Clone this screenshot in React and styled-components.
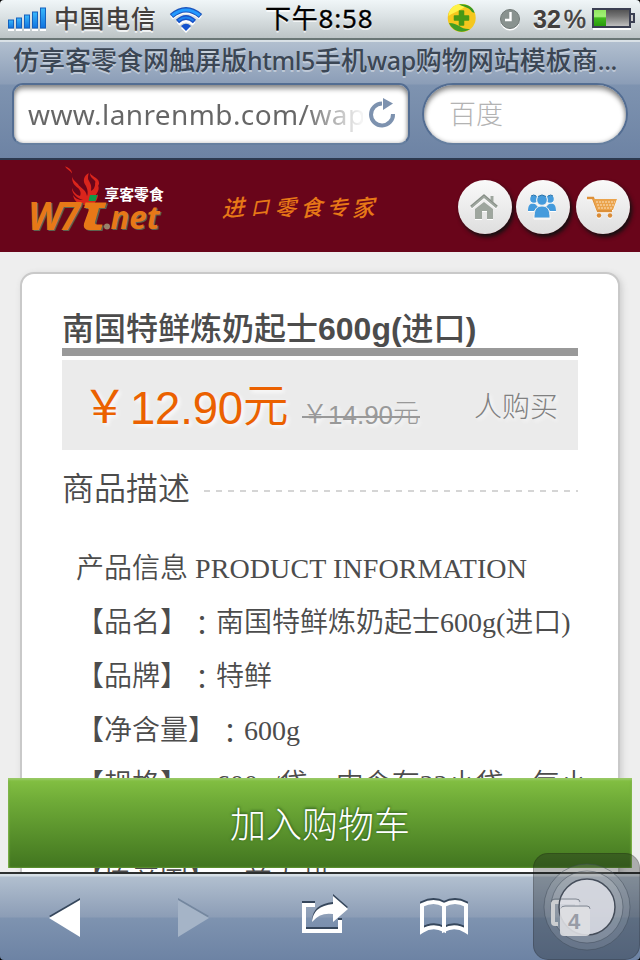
import React from 'react';
import styled, { createGlobalStyle } from 'styled-components';

const cjk = '"Noto Sans CJK SC", sans-serif';

const GlobalStyle = createGlobalStyle`
  * { box-sizing: border-box; }
  body { margin: 0; background: #000; }
`;

const Phone = styled.div`
  width: 640px;
  height: 960px;
  display: flex;
  flex-direction: column;
  position: relative;
  overflow: hidden;
  border-radius: 4px;
  font-family: "Liberation Sans", ${cjk};
  white-space: nowrap;
  text-spacing-trim: space-all;
`;

/* ---------- status bar ---------- */

const StatusBar = styled.div`
  flex: none;
  height: 40px;
  display: flex;
  align-items: center;
  padding: 0 0 2px 8px;
  background: linear-gradient(#f0f6f8 0, #dce3e5 16px, #bdc4c6 38px);
  border-bottom: 2px solid #6b7776;
  text-shadow: 0 2px 0 rgba(255, 255, 255, 0.75);
  & > * { flex: none; }
`;

const Carrier = styled.span`
  width: 122px;
  padding-left: 7px;
  font: 500 25px/38px ${cjk};
  letter-spacing: 0.6px;
  margin-top: -2px;
  color: #43403e;
`;

const WifiSlot = styled.span`
  display: flex;
  margin-top: 2px;
`;

const Clock = styled.span`
  width: 182px;
  margin-left: 62px;
  font: 400 26px/38px "Noto Sans", ${cjk};
  letter-spacing: 0.8px;
  -webkit-text-stroke: 0.3px #000;
  color: #000;
`;

const AlarmSlot = styled.span`
  display: flex;
  margin: 2px 0 0 22px;
`;

const Percent = styled.span`
  display: flex;
  gap: 3px;
  width: 59px;
  margin: 2px 0 0 12px;
  font: bold 25px/38px "Liberation Sans", sans-serif;
  color: #43403e;
`;

const PercentSign = styled.span`
  font-weight: 400;
  -webkit-text-stroke: 0.5px #43403e;
`;

/* ---------- browser chrome ---------- */

const BrowserBar = styled.div`
  flex: none;
  height: 120px;
  border-top: 2px solid #d9e1e6;
  border-bottom: 2px solid #2c394f;
  background: linear-gradient(#b1bfcf 0, #8b9db7 42px, #7e93b0 43px, #6d83a4 100%);
`;

const PageTitle = styled.div`
  height: 41px;
  padding-left: 13px;
  font: 500 26px/34px ${cjk};
  color: #3b4654;
  text-shadow: 0 2px 0 rgba(255, 255, 255, 0.4);
`;

const TitleLatin = styled.span`
  font: 500 25px/30px "Noto Sans", sans-serif;
  letter-spacing: -0.4px;
`;

const Fields = styled.div`
  display: flex;
  gap: 12px;
  padding: 0 12px;
`;

const Field = styled.div`
  height: 62px;
  display: flex;
  align-items: center;
  border: 2px solid #536d92;
  border-bottom-color: #667f9f;
  background: #fff;
  box-shadow: inset 0 4px 5px rgba(0, 0, 0, 0.4), inset 0 0 4px rgba(0, 0, 0, 0.25);
`;

const UrlField = styled(Field)`
  width: 398px;
  border-radius: 11px;
  padding: 0 12px 0 14px;
`;

const Url = styled.span`
  flex: 1;
  min-width: 0;
  margin-right: 5px;
  overflow: hidden;
  font: 28px/48px "Noto Sans", sans-serif;
  letter-spacing: 0.4px;
  color: transparent;
  background: linear-gradient(90deg, #666 0, #666 275px, #f4f4f4 333px);
  background-clip: text;
`;

const SearchField = styled(Field)`
  width: 206px;
  border-radius: 31px;
  padding: 0 0 2px 25px;
  font: 300 27px/50px ${cjk};
  color: #b3b3b3;
`;

/* ---------- web page ---------- */

const SiteHeader = styled.header`
  flex: none;
  height: 92px;
  display: flex;
  align-items: center;
  background: #69051a;
  padding: 0 8px 0 24px;
  & > * { flex: none; }
`;

const Slogan = styled.div`
  display: flex;
  width: 234px;
  margin: 0 0 1px 58px;
  font: 500 23px/40px ${cjk};
  color: #e77817;
`;

const SloganChar = styled.span`
  width: 26px;
  transform: skew(-12deg, -7deg) scale(${(p) => p.$scale});
`;

const RoundButtons = styled.div`
  display: flex;
  margin-top: 2px;
`;

const RoundButton = styled.button`
  display: flex;
  align-items: center;
  justify-content: center;
  width: 54px;
  height: 54px;
  margin-right: ${(p) => p.$gap || 0}px;
  padding: 0 2px 0 0;
  border: 0;
  border-radius: 50%;
  background: linear-gradient(#fafafa, #dedede);
  box-shadow: 2px 3px 4px #111;
  svg { filter: drop-shadow(0 1px 0 #fff); }
`;

const Viewport = styled.main`
  flex: 1;
  min-height: 0;
  position: relative;
  overflow: hidden;
  background: #eee;
  padding: 20px;
`;

const Card = styled.section`
  height: 900px;
  padding: 33px 40px;
  border: 2px solid #c9c9c9;
  border-radius: 14px;
  background: #fff;
  box-shadow: 2px 2px 6px #ccc;
  color: #4c4c4c;
`;

const ProductTitle = styled.h1`
  height: 49px;
  margin: 0;
  border-bottom: 8px solid #999;
  font: bold 32px/44px "Liberation Sans", ${cjk};
`;

const TitleHan = styled.span`
  font-weight: 500;
`;

const PriceBox = styled.div`
  height: 90px;
  margin-top: 4px;
  padding: 0 20px;
  display: flex;
  align-items: center;
  background: #ebebeb;
  text-shadow: 2px 2px 4px #fff;
`;

const Price = styled.span`
  display: flex;
  width: 220px;
  padding-top: 8px;
  font: 45.5px/90px "Liberation Sans", sans-serif;
  letter-spacing: -0.2px;
  color: #eb6100;
`;

const Yen = styled.span`
  width: ${(p) => p.$w}px;
  margin-top: ${(p) => p.$lift}px;
  font-family: ${cjk};
  font-weight: ${(p) => p.$weight};
`;

const Yuan = styled.span`
  margin-top: ${(p) => p.$lift}px;
  font-family: ${cjk};
  font-weight: ${(p) => p.$weight};
`;

const OldPrice = styled.span`
  position: relative;
  display: flex;
  width: 118px;
  margin: 20px 0 0;
  font: 26px/40px "Liberation Sans", sans-serif;
  color: #999;
  &::after {
    content: '';
    position: absolute;
    left: 0;
    right: 0;
    top: 21px;
    height: 2px;
    background: #999;
  }
`;

const Buyers = styled.span`
  margin: 0 0 1px auto;
  font: 300 28px/80px ${cjk};
  color: #808080;
`;

const SectionHeading = styled.h2`
  display: flex;
  align-items: center;
  gap: 14px;
  height: 80px;
  margin: 0;
  font: 350 32px/72px ${cjk};
  color: #4c4c4c;
`;

const HeadingText = styled.span`
  margin-top: -9px;
`;

const Dashes = styled.i`
  flex: 1;
  height: 2px;
  margin-top: 2px;
  background: repeating-linear-gradient(90deg, #d5d5d5 0 6px, transparent 6px 12px);
`;

const Details = styled.div`
  padding: 19px 0 0 14px;
  font: 350 28px/40px "Liberation Serif", ${cjk};
  p { margin: 0 0 14px; }
`;

const Latin = styled.span`
  letter-spacing: 0.1px;
`;

const Colon = styled.span`
  font-family: "Noto Sans CJK TC", sans-serif;
  line-height: 0;
  vertical-align: -4px;
`;

const BuyButton = styled.button`
  position: absolute;
  left: 8px;
  right: 8px;
  bottom: 4px;
  height: 90px;
  padding: 0 0 2px;
  border: 0;
  background: linear-gradient(#84c143 0, #6eaa37 27%, #41751f 100%);
  box-shadow: inset 0 2px 2px #99c966, inset 1px 0 2px #78ad43, inset -1px 0 2px #78ad43;
  color: #fff;
  font: 300 36px/86px ${cjk};
  text-shadow: 0 -1px 3px #21501b;
`;

/* ---------- bottom toolbar ---------- */

const Toolbar = styled.nav`
  flex: none;
  height: 88px;
  display: flex;
  align-items: center;
  padding: 0 0 2px 47px;
  border-top: 2px solid #2d3030;
  background: linear-gradient(#d6dfe6 0 2px, #b1bfcf 3px, #8c9db6 43px, #7e93b0 44px, #6d83a4 86px);
`;

const ToolIcon = styled.svg`
  flex: none;
  width: 50px;
  height: 50px;
  margin-right: ${(p) => p.$after}px;
  overflow: visible;
`;

const AssistiveTouch = styled.div`
  position: absolute;
  left: 533px;
  top: 853px;
  width: 107px;
  height: 107px;
  border-radius: 15px;
  background: rgba(20, 22, 24, 0.3);
  border: 1px solid rgba(0, 0, 0, 0.16);
  svg { display: block; margin: -1px; }
`;

const SignalIcon = () => (
  <svg width="39" height="38" viewBox="0 0 39 38">
    <defs>
      <linearGradient id="sig" x1="0" y1="0" x2="0" y2="1">
        <stop stopColor="#39b8fb" /><stop offset="1" stopColor="#1173df" />
      </linearGradient>
    </defs>
    {[8, 10, 13, 16, 20].map((h, i) => (
      <g key={h}>
        <rect x={i * 8} y="30" width="6" height="2" fill="#fff" />
        <rect x={i * 8 + 0.5} y={29 - h} width="5" height={h} fill="url(#sig)" stroke="#1561bd" />
      </g>
    ))}
  </svg>
);

const WifiIcon = () => (
  <svg width="34" height="38" viewBox="0 0 34 38">
    <g fill="none" stroke="#fff" strokeWidth="4" transform="translate(0 2)">
      <path d="M2.5 16Q17 3.5 31.5 16M9 22Q17 15 25 22" />
      <path d="M12 26Q17 21.5 22 26L17 31z" fill="#fff" stroke="none" />
    </g>
    <path d="M2.5 16Q17 3.5 31.5 16" fill="none" stroke="#1c55bd" strokeWidth="5.2" />
    <path d="M3.2 15.5Q17 4.5 30.8 15.5" fill="none" stroke="#239aff" strokeWidth="3" />
    <path d="M8.5 21.5Q17 13.5 25.5 21.5" fill="none" stroke="#1851c6" strokeWidth="4.6" />
    <path d="M9.5 20.5Q17 14.5 24.5 20.5" fill="none" stroke="#1d82ee" strokeWidth="2" />
    <path d="M12 26Q17 21.5 22 26L17 31z" fill="#1553ce" />
  </svg>
);

const ShieldIcon = () => (
  <svg width="30" height="38" viewBox="0 0 30 38">
    <circle cx="14.7" cy="19" r="14" fill="#f5c71d" />
    <path d="M1.5 17C2 6 13 3 20 6C15 11 9 12 1.5 17z" fill="#fff347" />
    <path d="M12 5.500C20 4 27 9 27.500 14L25 13C23 9 18 8 12 5.500z" fill="#389a20" />
    <path d="M2 24C12 24 14 31 23 30C14 36 5 31 2 24z" fill="#419d25" />
    <path d="M12.500 12h4v5h5v4h-5v5h-4v-5h-5v-4h5z" fill="#499916" stroke="#499916" strokeWidth="1.5" strokeLinejoin="round" />
  </svg>
);

const AlarmIcon = () => (
  <svg width="22" height="38" viewBox="0 0 22 38">
    <circle cx="11" cy="21" r="9.5" fill="#fff" />
    <circle cx="11" cy="19" r="9.5" fill="#89928f" stroke="#727a78" />
    <path d="M11.5 12v8H6" fill="none" stroke="#fff" strokeWidth="2.4" />
  </svg>
);

const BatteryIcon = () => (
  <svg width="43" height="38" viewBox="0 0 43 38">
    <defs>
      <linearGradient id="batDark" x1="0" y1="0" x2="0" y2="1">
        <stop stopColor="#4f4f50" /><stop offset=".4" stopColor="#767676" /><stop offset="1" stopColor="#c6c6c6" />
      </linearGradient>
      <linearGradient id="batGreen" x1="0" y1="0" x2="0" y2="1">
        <stop stopColor="#91e661" /><stop offset=".4" stopColor="#a2f277" /><stop offset=".5" stopColor="#41ba1d" /><stop offset="1" stopColor="#299b0c" />
      </linearGradient>
    </defs>
    <rect x="1" y="29" width="38" height="2" fill="#fff" />
    <rect x="1" y="10" width="37" height="18" fill="url(#batDark)" stroke="#3a3f52" strokeWidth="2" />
    <rect x="2" y="11" width="12" height="16" fill="url(#batGreen)" />
    <path d="M39 15h3v8h-3" fill="#ccc" stroke="#3a3f52" strokeWidth="2" />
  </svg>
);

const ReloadIcon = () => (
  <svg width="28" height="32" viewBox="2 2 28 32">
    <path d="M16 7.5A11 11 0 1 0 27 18" fill="none" stroke="#7d92af" strokeWidth="4" />
    <path d="M17 2l10 5.500-10 6.500z" fill="#7d92af" />
  </svg>
);

const Wordmark = ({ fill }) => (
  <g fill={fill} fontFamily="Open Sans, Noto Sans, sans-serif" fontWeight="700" fontStyle="italic">
    <text x="28" y="229.5" fontSize="39" textLength="34" lengthAdjust="spacingAndGlyphs">W</text>
    <text x="60" y="229.5" fontSize="39" textLength="20" lengthAdjust="spacingAndGlyphs">7</text>
    <path d="M85.500 202.500H106.500l-1.800 5.500H99l-4 14q-.5 2.500 2 2.500h5.500l-1.500 5.500H89q-6.500 0-5-6.500L88.500 211q.8-3-2-3H84z" />
    <text x="110.5" y="229" fontSize="33" textLength="49" lengthAdjust="spacingAndGlyphs">net</text>
  </g>
);

const Logo = () => (
  <svg width="142" height="92" viewBox="24 160 142 92">
    <g fill="#da251c">
      <path d="M65 166.5c3 .5 7 3 7 7-2-3-5-4-7-7z" />
      <path d="M72 176c0 7 2 9 6 12 3 3 3 6 2 8-6-2-7-6-8-8 0 6 5 10 11 12-5 0-8-2-10-5 1 6 5 9 11 10h10c0-3 4-4 4-11-1 2-2 3-4 3 5-5 7-11 1-15 1 5-1 7-4 9 1-6-1-8-3-12 0-5 1-6 1-6-5 2-7 8-3 13 2 4 2 8 1 10-1-7-7-8-9-12-3-3-6-5-6-8z" />
      <path d="M90 173c2 4 10 5 9 11-1 3-4 4-4 8-2-6 2-8 0-11-2-3-5-3-5-8z" />
    </g>
    <g transform="translate(1.5 1)"><Wordmark fill="#5c6350" /></g>
    <Wordmark fill="#e77817" />
    <path fill="#0d9b49" d="M90 195h7.5l-2 6h-7z" />
    <circle cx="107" cy="226.5" r="3" fill="#99836b" />
    <text x="104.5" y="199.500" fontSize="14.8" fontFamily="Noto Sans CJK SC" fontWeight="700" fill="#fff">享客零食</text>
  </svg>
);

const HomeIcon = () => (
  <svg width="28" height="28" viewBox="0 0 28 28">
    <path d="M1 14L14 3l13 11M22 9V3" fill="none" stroke="#9ea69e" strokeWidth="3" />
    <path d="M5 16l9-7 9 7v10h-6v-8h-5v8H5z" fill="#9ea69e" />
    <path d="M1 13L14 2l13 11" fill="none" stroke="#7d847e" strokeWidth="0.8" />
  </svg>
);

const UsersIcon = () => (
  <svg width="28" height="28" viewBox="0 0 28 28">
    <g fill="#459bdc">
      <circle cx="6" cy="6" r="3.8" /><circle cx="22" cy="6" r="3.8" />
      <path d="M0 18c0-7 3-8 7-7l3 3-4 4zM28 18c0-7-3-8-7-7l-3 3 4 4z" />
      <circle cx="14" cy="7" r="6" fill="#ebeeef" /><circle cx="14" cy="7" r="4.8" />
      <path d="M6 25c0-8 2-12 8-12s8 4 8 12z" stroke="#eee" strokeWidth="1" />
    </g>
    <path d="M10 3.5q4-3 8 0M3 3q3-2 5 0M20 3q3-2 5 0" fill="none" stroke="#246fa8" />
  </svg>
);

const CartIcon = () => (
  <svg width="32" height="28" viewBox="0 0 32 28">
    <path d="M1 5h6l5 13h14" fill="none" stroke="#dd9038" strokeWidth="2.5" />
    <path d="M7 6h24l-4 11H11z" fill="#eaa34c" />
    <path d="M10 9h19M11 12h17M12 15h14" stroke="#fbe1bd" strokeWidth="1.2" strokeDasharray="2 1" />
    <circle cx="13" cy="22.5" r="2.2" fill="#d98b36" /><circle cx="24" cy="22.5" r="2.2" fill="#d98b36" />
  </svg>
);

const slogan = [['进', 1], ['口', 0.8], ['零', 0.95], ['食', 0.98], ['专', 0.92], ['家', 1]];

export default function App() {
  return (
    <>
      <GlobalStyle />
      <Phone>
        <StatusBar>
          <SignalIcon />
          <Carrier>中国电信</Carrier>
          <WifiSlot><WifiIcon /></WifiSlot>
          <Clock>下午8:58</Clock>
          <ShieldIcon />
          <AlarmSlot><AlarmIcon /></AlarmSlot>
          <Percent>32<PercentSign>%</PercentSign></Percent>
          <BatteryIcon />
        </StatusBar>

        <BrowserBar>
          <PageTitle>
            仿享客零食网触屏版<TitleLatin>html5</TitleLatin>手机<TitleLatin>wap</TitleLatin>购物网站模板商<TitleLatin>...</TitleLatin>
          </PageTitle>
          <Fields>
            <UrlField><Url>www.lanrenmb.com/wap</Url><ReloadIcon /></UrlField>
            <SearchField>百度</SearchField>
          </Fields>
        </BrowserBar>

        <SiteHeader>
          <Logo />
          <Slogan>
            {slogan.map(([char, scale]) => <SloganChar key={char} $scale={scale}>{char}</SloganChar>)}
          </Slogan>
          <RoundButtons>
            <RoundButton $gap={4} aria-label="首页"><HomeIcon /></RoundButton>
            <RoundButton $gap={6} aria-label="会员"><UsersIcon /></RoundButton>
            <RoundButton aria-label="购物车"><CartIcon /></RoundButton>
          </RoundButtons>
        </SiteHeader>

        <Viewport>
          <Card>
            <ProductTitle><TitleHan>南国特鲜炼奶起士</TitleHan>600g(<TitleHan>进口</TitleHan>)</ProductTitle>
            <PriceBox>
              <Price><Yen $w={48} $lift={-6} $weight={400}>￥</Yen>12.90<Yuan $lift={-7} $weight={350}>元</Yuan></Price>
              <OldPrice><Yen $w={26} $lift={-3} $weight={350}>￥</Yen>14.90<Yuan $lift={-4} $weight={300}>元</Yuan></OldPrice>
              <Buyers>人购买</Buyers>
            </PriceBox>
            <SectionHeading><HeadingText>商品描述</HeadingText><Dashes /></SectionHeading>
            <Details>
              <p>产品信息 <Latin>PRODUCT INFORMATION</Latin></p>
              <p>【品名】<Colon>：</Colon>南国特鲜炼奶起士600g(进口)</p>
              <p>【品牌】<Colon>：</Colon>特鲜</p>
              <p>【净含量】<Colon>：</Colon>600g</p>
              <p>【规格】<Colon>：</Colon>600g/袋，内含有22小袋，每小<br />袋约27g</p>
              <p>【原产国】<Colon>：</Colon>意大利</p>
            </Details>
          </Card>
          <BuyButton>加入购物车</BuyButton>
        </Viewport>

        <Toolbar>
          <ToolIcon $after={79} viewBox="0 0 50 50">
            <path d="M33 7v37L2 25z" fill="#36475c" /><path d="M33 9v37L2 27z" fill="#fff" />
          </ToolIcon>
          <ToolIcon $after={74} viewBox="0 0 50 50">
            <path d="M2 7v37l31-19z" fill="#74879f" /><path d="M2 9v37l31-19z" fill="#a5b4c7" />
          </ToolIcon>
          <ToolIcon $after={69} viewBox="0 0 50 50">
            {['#36475c', '#fff'].map((c, i) => (
              <g key={c} transform={`translate(0 ${i * 2 - 2})`}>
                <path d="M15 14H4v26h36V29" fill="none" stroke={c} strokeWidth="4" />
                <path d="M12 31Q13 15 33 13V5l15 13-15 13v-8Q20 21 12 31z" fill={c} />
              </g>
            ))}
          </ToolIcon>
          <ToolIcon $after={0} viewBox="0 0 50 50">
            {['#36475c', '#fff'].map((c, i) => (
              <path key={c} transform={`translate(0 ${i * 2 - 2})`} d="M3 14q12-6 22 0v25q-11-6-22 1zM25 14q11-6 22 0v26q-11-7-22-1z" fill="none" stroke={c} strokeWidth="4" />
            ))}
          </ToolIcon>
        </Toolbar>

        <AssistiveTouch>
          <svg width="107" height="107" viewBox="0 0 107 107">
            <circle cx="54" cy="54" r="43" fill="#fff" fillOpacity=".11" stroke="#3b4654" strokeOpacity=".45" />
            <circle cx="54" cy="54" r="36" fill="#fff" fillOpacity=".15" stroke="#3b4654" strokeOpacity=".45" />
            <path d="M25 73h-3q-4 0-4-4V51q0-4 4-4h20q4 0 4 4v2H42v-2H22v18h3z" fill="#ccced1" />
            <circle cx="54" cy="54" r="28" fill="#dfe1e8" fillOpacity=".82" stroke="#454d5a" strokeWidth="1.5" />
            <path d="M18 49q0-3 4-3h21q4 0 4 3M28 56q0-3 4-3h22q3 0 3 3" fill="none" stroke="#606773" strokeOpacity=".7" />
            <rect x="27" y="54" width="30" height="29" rx="4" fill="#dedfe2" fillOpacity=".9" />
            <text x="35" y="76" fontSize="22" fontFamily="Liberation Sans" fontWeight="700" fill="#989ca6">4</text>
          </svg>
        </AssistiveTouch>
      </Phone>
    </>
  );
}
